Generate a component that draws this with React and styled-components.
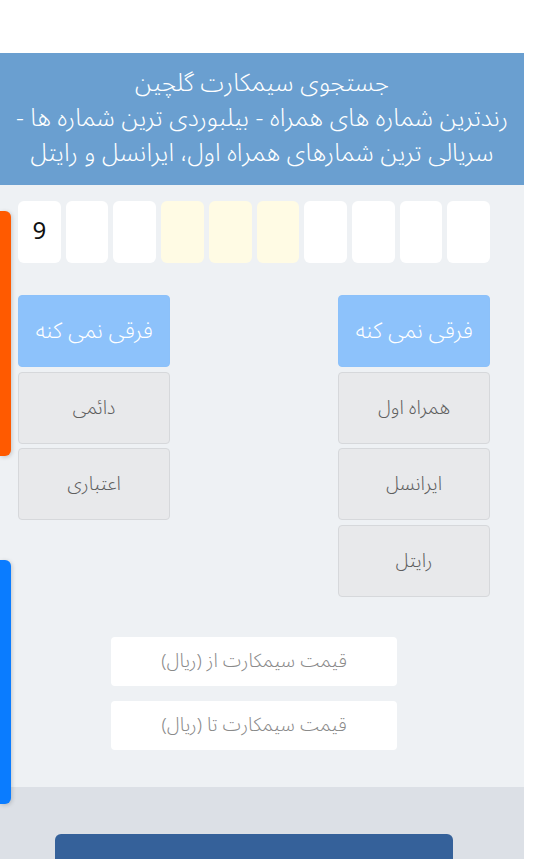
import React from 'react'
import styled, { createGlobalStyle } from 'styled-components'

const Global = createGlobalStyle`
  html, body {
    margin: 0;
    padding: 0;
    background: #ffffff;
  }
  body {
    font-family: "Noto Sans Arabic", "DejaVu Sans", "Noto Sans", sans-serif;
  }
`

const Page = styled.div`
  position: relative;
  padding-top: 53px;
  width: 551px;
  overflow: hidden;
`

const Card = styled.div`
  width: 524px;
  background: #eef1f4;
  direction: rtl;
`

const Header = styled.div`
  height: 132px;
  box-sizing: border-box;
  padding-top: 13px;
  background: #6a9fd0;
  color: #ffffff;
  text-align: center;
  font-size: 24.5px;
  font-weight: 300;
  line-height: 35px;
  white-space: nowrap;
`

const Body = styled.div`
  padding: 16px 34px 37px 18px;
`

const Digits = styled.div`
  display: flex;
  direction: ltr;
  gap: 5px;
`

const Digit = styled.div`
  flex: 1;
  height: 62px;
  border-radius: 6px;
  background: ${p => (p.$hint ? '#fffbe4' : '#ffffff')};
  color: #111;
  font-size: 24px;
  text-align: center;
  line-height: 58px;
  font-family: "Noto Sans", "DejaVu Sans", sans-serif;
`

const Options = styled.div`
  display: flex;
  justify-content: space-between;
  margin-top: 32px;
`

const Column = styled.div`
  display: flex;
  flex-direction: column;
  gap: 4.5px;
  width: 152px;
`

const Option = styled.div`
  height: 72px;
  box-sizing: border-box;
  display: flex;
  align-items: center;
  justify-content: center;
  border-radius: 4px;
  border: 1px solid ${p => (p.$active ? '#8cc1fa' : '#d6d8db')};
  background: ${p => (p.$active ? '#8dc2fb' : '#e8e9eb')};
  color: ${p => (p.$active ? '#ffffff' : '#5e5e5e')};
  font-size: ${p => (p.$active ? '22px' : '19px')};
  font-weight: 300;
`

const Prices = styled.div`
  display: flex;
  flex-direction: column;
  align-items: center;
  gap: 15px;
  margin-top: 40px;
`

const PriceInput = styled.div`
  width: 286px;
  height: 49px;
  border-radius: 4px;
  background: #ffffff;
  color: #8a8a8a;
  font-size: 19px;
  font-weight: 300;
  display: flex;
  align-items: center;
  justify-content: center;
`

const Footer = styled.div`
  background: #dce0e6;
  padding: 47px 71px 40px 55px;
`

const SubmitButton = styled.div`
  height: 60px;
  border-radius: 6px;
  background: #35619a;
`

const SideTab = styled.div`
  position: absolute;
  left: 0;
  top: ${p => p.$top}px;
  width: 11px;
  height: ${p => p.$height}px;
  background: ${p => p.$color};
  border-radius: 0 6px 6px 0;
  box-shadow: 1px 1px 4px rgba(0, 0, 0, 0.18);
`

const operators = ['فرقی نمی کنه', 'همراه اول', 'ایرانسل', 'رایتل']
const types = ['فرقی نمی کنه', 'دائمی', 'اعتباری']
const digits = ['9', '', '', '', '', '', '', '', '', '']

export default function App() {
  return (
    <Page>
      <Global />
      <Card>
        <Header>
          جستجوی سیمکارت گلچین
          <br />
          رندترین شماره های همراه - بیلبوردی ترین شماره ها -
          <br />
          سریالی ترین شمارهای همراه اول، ایرانسل و رایتل
        </Header>
        <Body>
          <Digits>
            {digits.map((d, i) => (
              <Digit key={i} $hint={i >= 3 && i <= 5}>{d}</Digit>
            ))}
          </Digits>
          <Options>
            <Column>
              {operators.map((o, i) => (
                <Option key={o} $active={i === 0}>{o}</Option>
              ))}
            </Column>
            <Column>
              {types.map((t, i) => (
                <Option key={t} $active={i === 0}>{t}</Option>
              ))}
            </Column>
          </Options>
          <Prices>
            <PriceInput>قیمت سیمکارت از (ریال)</PriceInput>
            <PriceInput>قیمت سیمکارت تا (ریال)</PriceInput>
          </Prices>
        </Body>
        <Footer>
          <SubmitButton />
        </Footer>
      </Card>
      <SideTab $top={211} $height={245} $color="#ff5a00" />
      <SideTab $top={560} $height={244} $color="#0a7cff" />
    </Page>
  )
}
